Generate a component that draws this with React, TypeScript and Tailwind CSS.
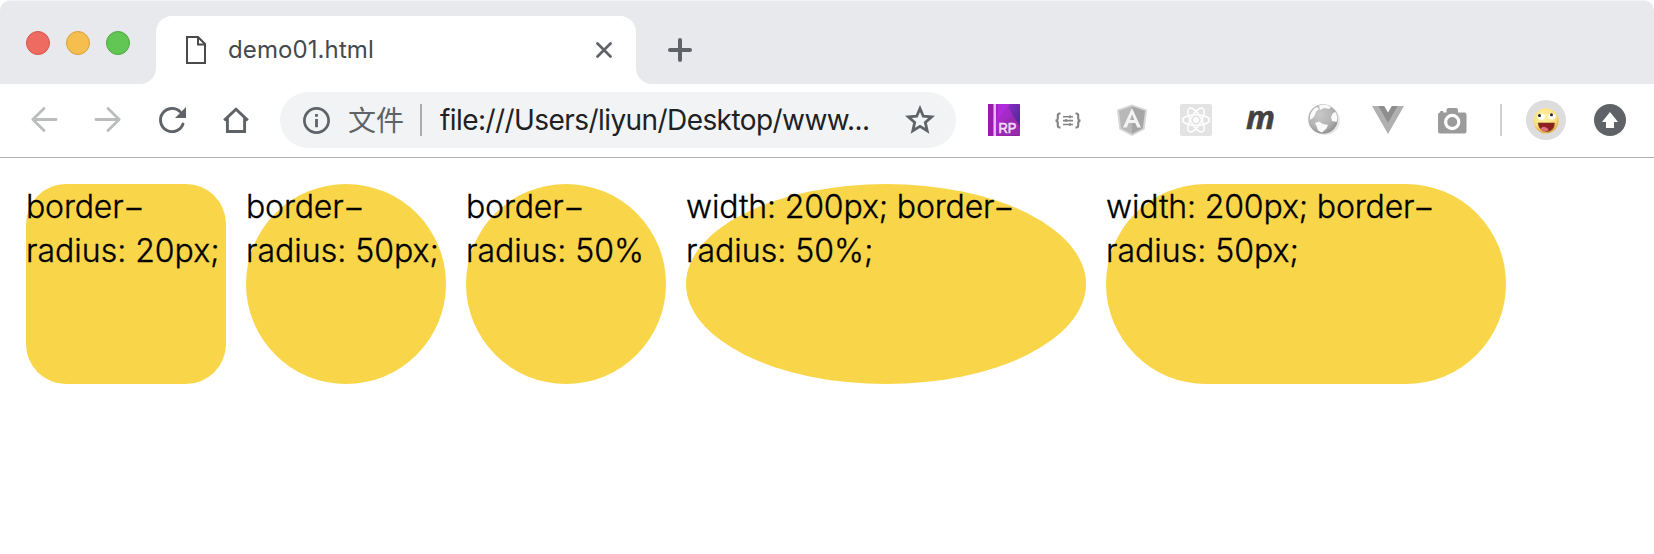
import type { ReactNode } from 'react'

function Cell({ children, label }: { children: ReactNode; label: string }) {
  return (
    <button aria-label={label} className="flex h-14 w-16 shrink-0 items-center justify-center">
      <svg width="40" height="40" viewBox="-20 -20 40 40" fill="none" className="overflow-visible">
        {children}
      </svg>
    </button>
  )
}

function TabStrip() {
  return (
    <div className="flex h-[84px] items-end rounded-t-[10px] border-t border-[#f3f4f5] bg-[#e8e9ed]">
      <div className="flex h-[84px] w-[140px] shrink-0 items-center gap-4 pl-[26px] pt-px">
        <span className="size-6 rounded-full border border-[#d9544b] bg-[#ed6b60]" />
        <span className="size-6 rounded-full border border-[#d9a03c] bg-[#f5be4f]" />
        <span className="size-6 rounded-full border border-[#4fa73f] bg-[#62c655]" />
      </div>
      <svg width="16" height="16" className="shrink-0">
        <path d="M16 0V16H0A16 16 0 0 0 16 0Z" fill="#fff" />
      </svg>
      <div className="flex h-[68px] w-[480px] shrink-0 items-center rounded-t-2xl bg-white pl-[30px] pr-6">
        <svg width="20" height="28" viewBox="0 0 20 28" fill="none" stroke="#4a4a4a" strokeWidth="2" className="shrink-0">
          <path d="M1 1H12L19 8V27H1Z" />
          <path d="M12 1V8.500H19" />
        </svg>
        <span className="ml-[22px] flex-1 text-2xl leading-8 tracking-[0.1px] text-[#45494d]">demo01.html</span>
        <svg width="16" height="16" viewBox="0 0 16 16" stroke="#5f6368" strokeWidth="2.700" strokeLinecap="round" className="shrink-0">
          <path d="M1.500 1.500L14.500 14.500M14.500 1.500L1.500 14.500" />
        </svg>
      </div>
      <svg width="16" height="16" className="shrink-0">
        <path d="M0 0V16H16A16 16 0 0 1 0 0Z" fill="#fff" />
      </svg>
      <svg width="24" height="24" viewBox="0 0 24 24" stroke="#5f6368" strokeWidth="4" strokeLinecap="round" className="mb-[22px] ml-4 shrink-0">
        <path d="M12 2V22M2 12H22" />
      </svg>
    </div>
  )
}

function AddressBar() {
  return (
    <div className="ml-3 flex h-14 w-[676px] shrink-0 items-center rounded-full bg-[#f1f3f4] pl-[23px] pr-[21px]">
      <svg width="27" height="27" viewBox="-13.5 -13.5 27 27" fill="none" className="shrink-0">
        <circle r="12.100" stroke="#5f6368" strokeWidth="2.700" />
        <path d="M0 -6.500V-3.800M0 -1.500V6.700" stroke="#5f6368" strokeWidth="2.800" />
      </svg>
      <span className="-mt-0.5 ml-[18px] w-[72px] text-[28px] leading-10 text-[#5f6368] font-['Noto_Sans_CJK_SC',sans-serif]">文件</span>
      <span className="h-8 w-0.5 bg-[#a9abae]" />
      <span className="ml-[18px] flex-1 whitespace-nowrap text-[28px] leading-10 tracking-[-0.57px] text-[#202124]">
        file:///Users/liyun/Desktop/www...
      </span>
      <svg width="30" height="30" viewBox="-15 -15 30 30" fill="none" className="shrink-0">
        <path d="M0 -11.500L3.300 -3.800L11.600 -3.100L5.300 2.400L7.200 10.700L0 6.300L-7.200 10.700L-5.300 2.400L-11.600 -3.100L-3.300 -3.800Z" stroke="#5f6368" strokeWidth="2.800" />
      </svg>
    </div>
  )
}

function Toolbar() {
  return (
    <div className="flex h-[74px] items-start border-b border-[#b0b1b3] bg-white pl-3 pt-2">
      <Cell label="Back">
        <path d="M12 -0.500H-11M0 -11.500L-11.200 -0.500L0 10.500" stroke="#babcbe" strokeWidth="2.800" strokeLinecap="round" strokeLinejoin="round" />
      </Cell>
      <Cell label="Forward">
        <path d="M-12 -0.500H11M0 -11.500L11.200 -0.500L0 10.500" stroke="#babcbe" strokeWidth="2.800" strokeLinecap="round" strokeLinejoin="round" />
      </Cell>
      <Cell label="Reload">
        <path d="M8.200 -8.300A11.600 11.600 0 1 0 11 4" stroke="#5f6368" strokeWidth="2.900" strokeLinecap="round" />
        <path d="M14 -13V-2H3Z" fill="#5f6368" />
      </Cell>
      <Cell label="Home">
        <path d="M-11.800 0.400L0 -10.800L11.800 0.400M-8.600 -2V11.500H8.600V-2" stroke="#5f6368" strokeWidth="2.900" strokeLinejoin="miter" />
      </Cell>
      <AddressBar />
      <div className="ml-4 flex">
        <Cell label="RP">
          <defs>
            <linearGradient id="rp" x1="0" y1="0" x2="1" y2="1">
              <stop offset="0" stopColor="#9a1fb5" />
              <stop offset="0.450" stopColor="#a52bc8" />
              <stop offset="1" stopColor="#8a2090" />
            </linearGradient>
            <linearGradient id="rpEdge" x1="0" y1="0" x2="1" y2="1">
              <stop offset="0" stopColor="#8a2fc4" />
              <stop offset="1" stopColor="#4c2796" />
            </linearGradient>
          </defs>
          <rect x="-16" y="-16" width="32" height="32" rx="1" fill="url(#rp)" />
          <path d="M3 -16H15L16 -15V6L9 -4Z" fill="url(#rpEdge)" />
          <path d="M-6 -16H6L-6 0Z" fill="#b02bdc" />
          <path d="M9 -4L16 6V15H-8L0 2Z" fill="#982ab0" />
          <rect x="-16" y="-16" width="5" height="32" fill="#981cab" />
          <rect x="-10.500" y="-16" width="2.500" height="32" fill="#e3bdf0" />
          <text x="-5.500" y="12.500" fontSize="14.500" fontWeight="400" fill="#f3dcfa" stroke="#f3dcfa" strokeWidth="0.600" textLength="18" lengthAdjust="spacingAndGlyphs" fontFamily="Liberation Sans, sans-serif">RP</text>
        </Cell>
        <Cell label="JSON">
          <g stroke="#858585" strokeWidth="2.100">
            <path d="M-7.500 -6.500H-8.500Q-10.200 -6.500 -10.200 -4.500V-2Q-10.200 0.600 -12.500 0.600Q-10.200 0.600 -10.200 3.200V5.500Q-10.200 7.500 -8.500 7.500H-7.500" />
            <path d="M7.500 -6.500H8.500Q10.200 -6.500 10.200 -4.500V-2Q10.200 0.600 12.500 0.600Q10.200 0.600 10.200 3.200V5.500Q10.200 7.500 8.500 7.500H7.500" />
            <path d="M-5 -3.300H5M-5 0.600H5M-5 4.500H5" strokeWidth="1.600" />
            <path d="M2 -4.800V-1.800M-2 -0.900V2.100M2 3V6" strokeWidth="1.500" />
          </g>
        </Cell>
        <Cell label="Angular">
          <path d="M0 -15.500L15 -10.300L12.700 9.300L0 16L-12.700 9.300L-15 -10.300Z" fill="#d6d6d6" />
          <path d="M0 -13.700L-13 -9.200L-10.900 8.200L0 14Z" fill="#b8b8b8" />
          <path d="M0 -13.700L13 -9.200L10.900 8.200L0 14Z" fill="#a6a6a6" />
          <path d="M0 -12L9 7.500H5.200L3.300 3H-3.300L-5.200 7.500H-9ZM0 -5.500L-2.300 0H2.300Z" fill="#f3f3f3" fillRule="evenodd" />
        </Cell>
        <Cell label="React">
          <rect x="-16" y="-16" width="32" height="32" rx="2.500" fill="#e3e3e3" />
          <g stroke="#fff" strokeWidth="1.500">
            <ellipse rx="13.500" ry="5.300" />
            <ellipse rx="13.500" ry="5.300" transform="rotate(60)" />
            <ellipse rx="13.500" ry="5.300" transform="rotate(120)" />
          </g>
          <circle r="3" fill="#fff" />
        </Cell>
        <Cell label="Momentum">
          <text x="-14" y="9" fontSize="32" fontWeight="700" fontStyle="italic" fill="#424242" stroke="#424242" strokeWidth="0.500" textLength="29" lengthAdjust="spacingAndGlyphs" fontFamily="Open Sans, sans-serif">m</text>
        </Cell>
        <Cell label="Globe">
          <defs>
            <radialGradient id="globe" cx="0.400" cy="0.350" r="0.700">
              <stop offset="0" stopColor="#c8c8c8" />
              <stop offset="0.600" stopColor="#b4b4b4" />
              <stop offset="1" stopColor="#8e8e8e" />
            </radialGradient>
          </defs>
          <ellipse cx="1.500" cy="0.500" rx="14.500" ry="14.500" fill="#e8e8e8" />
          <circle cx="-1" cy="-1" r="14.800" fill="url(#globe)" />
          <path d="M-14 -4Q-12 -11 -7 -13L-5 -11L-8 -8L-10 -3L-14 0ZM-5 -14.500Q2 -16.500 7 -13L5 -11L0 -12L-4 -10ZM9 -7L11.500 -8Q14.500 -2 12.500 2L8 1L7 -3ZM-9 3L-5 1.500L-1 4L4 5L2.500 8.500L-2 12.500Q-7 11 -7 7Z" fill="#fafafa" />
        </Cell>
        <Cell label="Vue">
          <path d="M-16 -14H-9.500L0 2.500L9.500 -14H16L0 14Z" fill="#b0b0b0" />
          <path d="M-9.800 -14H-3.800L0 -7.500L3.800 -14H9.800L0 3Z" fill="#8e8e8e" />
        </Cell>
        <Cell label="Screenshot">
          <path d="M-12 -7.500L-11.500 -9H-9L-8.500 -7.500H-5.500V-10Q-5.500 -12 -3.500 -12H4Q6 -12 6 -10V-7.500H12.500Q14.500 -7.500 14.500 -5.500V11.500Q14.500 13.500 12.500 13.500H-12Q-14 13.500 -14 11.500V-5.500Q-14 -7.500 -12 -7.500Z" fill="#9b9b9b" />
          <circle cx="0.200" cy="2" r="6.600" stroke="#fff" strokeWidth="3.200" />
        </Cell>
      </div>
      <span className="ml-4 mt-3 h-8 w-0.5 shrink-0 bg-[#cfcfcf]" />
      <svg width="40" height="40" viewBox="-20 -20 40 40" className="ml-6 mt-2 shrink-0">
        <defs>
          <radialGradient id="face" cx="0.450" cy="0.350" r="0.650">
            <stop offset="0" stopColor="#fff3a8" />
            <stop offset="0.700" stopColor="#fbe07c" />
            <stop offset="1" stopColor="#dda63f" />
          </radialGradient>
        </defs>
        <circle r="20" fill="#dddddd" />
        <circle cx="0" cy="0.800" r="12.500" fill="url(#face)" />
        <ellipse cx="-4.800" cy="-3.200" rx="3.800" ry="3" fill="#fff" />
        <ellipse cx="6" cy="-3.600" rx="3.800" ry="3" fill="#fff" />
        <circle cx="-6.500" cy="-4.600" r="1.500" fill="#222" />
        <circle cx="5.500" cy="-5.200" r="1.500" fill="#222" />
        <path d="M-7.800 3H8.500Q8 11.200 1 11.500Q-7 11.200 -7.800 3Z" fill="#8f1f22" stroke="#6e3516" strokeWidth="0.600" />
        <path d="M-5.500 8.500Q-3 5.800 0 7.500Q2.500 8 2.500 10.500Q-3 12.500 -5.500 8.500Z" fill="#e0717c" />
      </svg>
      <svg width="32" height="32" viewBox="-16 -16 32 32" className="ml-7 mt-3 shrink-0">
        <circle r="16" fill="#5f6368" />
        <path d="M0 -8L8 2H4V8H-4V2H-8Z" fill="#fff" />
      </svg>
    </div>
  )
}

function BorderLine({ before = '' }: { before?: string }) {
  return (
    <span className="whitespace-nowrap tracking-[-0.15px]">
      {before}border<span className="-ml-px inline-block origin-left translate-y-px scale-x-[1.5]">-</span>
    </span>
  )
}

function Box({ shape, before, rest }: { shape: string; before?: string; rest: string }) {
  return (
    <div className={`flex h-[200px] shrink-0 flex-col whitespace-nowrap bg-[#f9d649] pt-px ${shape}`}>
      <BorderLine before={before} />
      <span>{rest}</span>
    </div>
  )
}

export default function App() {
  return (
    <div className="h-[554px] w-[1654px] overflow-hidden bg-white font-['Inter','Noto_Sans_CJK_SC',sans-serif]">
      <TabStrip />
      <Toolbar />
      <main className="flex gap-5 pl-[26px] pt-[26px] font-['Inter',sans-serif] text-[32px] font-light leading-[44px] text-black [-webkit-text-stroke:0.35px_black]">
        <Box shape="w-[200px] rounded-[40px]" rest="radius: 20px;" />
        <Box shape="w-[200px] rounded-[100px]" rest="radius: 50px;" />
        <Box shape="w-[200px] rounded-[50%]" rest="radius: 50%" />
        <Box shape="w-[400px] rounded-[50%]" before="width: 200px; " rest="radius: 50%;" />
        <Box shape="w-[400px] rounded-[100px]" before="width: 200px; " rest="radius: 50px;" />
      </main>
    </div>
  )
}
